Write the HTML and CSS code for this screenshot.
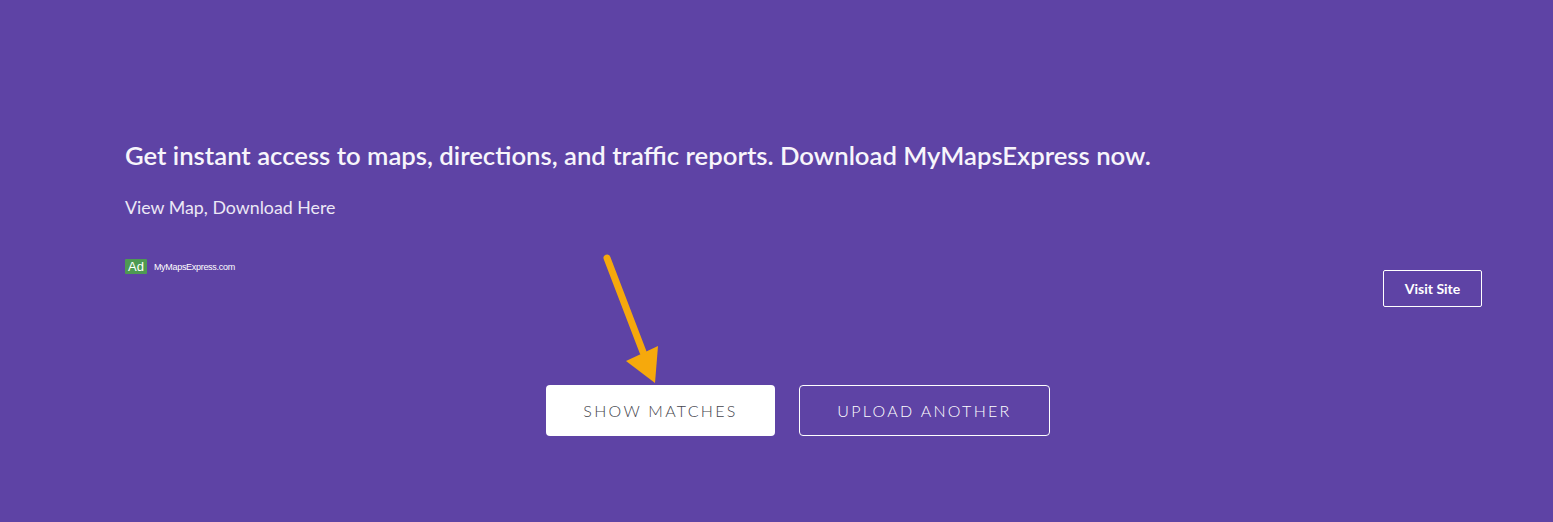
FILE: index.html
```html
<!DOCTYPE html>
<html>
<head>
  <meta charset="UTF-8">
  <title>Show Matches</title>
  <link rel="stylesheet" href="styles.css">
</head>
<body>
  <div class="page">
    <div class="ad">
      <div class="ad-main">
        <h2 class="ad-title">Get instant access to maps, directions, and traffic reports. Download MyMapsExpress now.</h2>
        <p class="ad-text">View Map, Download Here</p>
        <div class="ad-source">
          <span class="ad-badge">Ad</span>
          <span class="ad-url">MyMapsExpress.com</span>
        </div>
      </div>
      <a class="visit-btn" href="#">Visit Site</a>
    </div>

    <div class="actions">
      <button class="btn btn-solid">SHOW MATCHES</button>
      <button class="btn btn-outline">UPLOAD ANOTHER</button>
    </div>

    <!-- annotation arrow pointing at the first button -->
    <svg class="arrow" width="80" height="140" viewBox="0 0 80 140">
      <line x1="7" y1="4" x2="43" y2="98" stroke="#f6a90c" stroke-width="7" stroke-linecap="round"/>
      <polygon points="26,107 58,92 55,129" fill="#f6a90c"/>
    </svg>
  </div>
</body>
</html>
```

FILE: styles.css
```css
body {
  margin: 0;
  background-color: #5e43a5;
  font-family: 'Lato', 'Liberation Sans', sans-serif;
  color: #ffffff;
  overflow: hidden;
}

.page {
  position: relative;
  height: 522px;
  box-sizing: border-box;
  padding-top: 139px;
}

.ad {
  display: flex;
  align-items: flex-end;
  justify-content: space-between;
  padding: 0 71px 0 125px;
}

.ad-title {
  margin: 0;
  font-size: 25.7px;
  font-weight: 600;
  line-height: 32px;
  color: #f7f5fb;
}

.ad-text {
  margin: 24px 0 0 0;
  font-size: 17.8px;
  font-weight: 400;
  line-height: 24px;
  color: #ece8f5;
}

.ad-source {
  display: flex;
  align-items: center;
  margin-top: 40px;
  gap: 7px;
}

.ad-badge {
  background-color: #4e9a52;
  color: #ffffff;
  font-family: 'Liberation Sans', Arial, sans-serif;
  font-size: 13px;
  line-height: 15px;
  padding: 0 3px;
  border-radius: 1px;
}

.ad-url {
  font-family: 'Liberation Sans', Arial, sans-serif;
  font-size: 9px;
  letter-spacing: -0.3px;
  color: #ffffff;
}

.visit-btn {
  display: flex;
  align-items: center;
  justify-content: center;
  width: 97px;
  height: 35px;
  margin-bottom: -33px;
  border: 1px solid #ffffff;
  border-radius: 2px;
  color: #ffffff;
  font-size: 14px;
  font-weight: 700;
  text-decoration: none;
}

.actions {
  display: flex;
  justify-content: center;
  gap: 24px;
  margin-top: 111px;
  padding-left: 43px;
}

.btn {
  height: 51px;
  border-radius: 4px;
  font-family: 'Lato', 'Liberation Sans', sans-serif;
  font-size: 16px;
  font-weight: 300;
  letter-spacing: 2.3px;
  cursor: pointer;
}

.btn-solid {
  width: 229px;
  background-color: #ffffff;
  border: none;
  color: #45454d;
}

.btn-outline {
  width: 251px;
  background-color: transparent;
  border: 1px solid #ffffff;
  color: #ffffff;
}

.arrow {
  position: absolute;
  left: 600px;
  top: 254px;
}
```
